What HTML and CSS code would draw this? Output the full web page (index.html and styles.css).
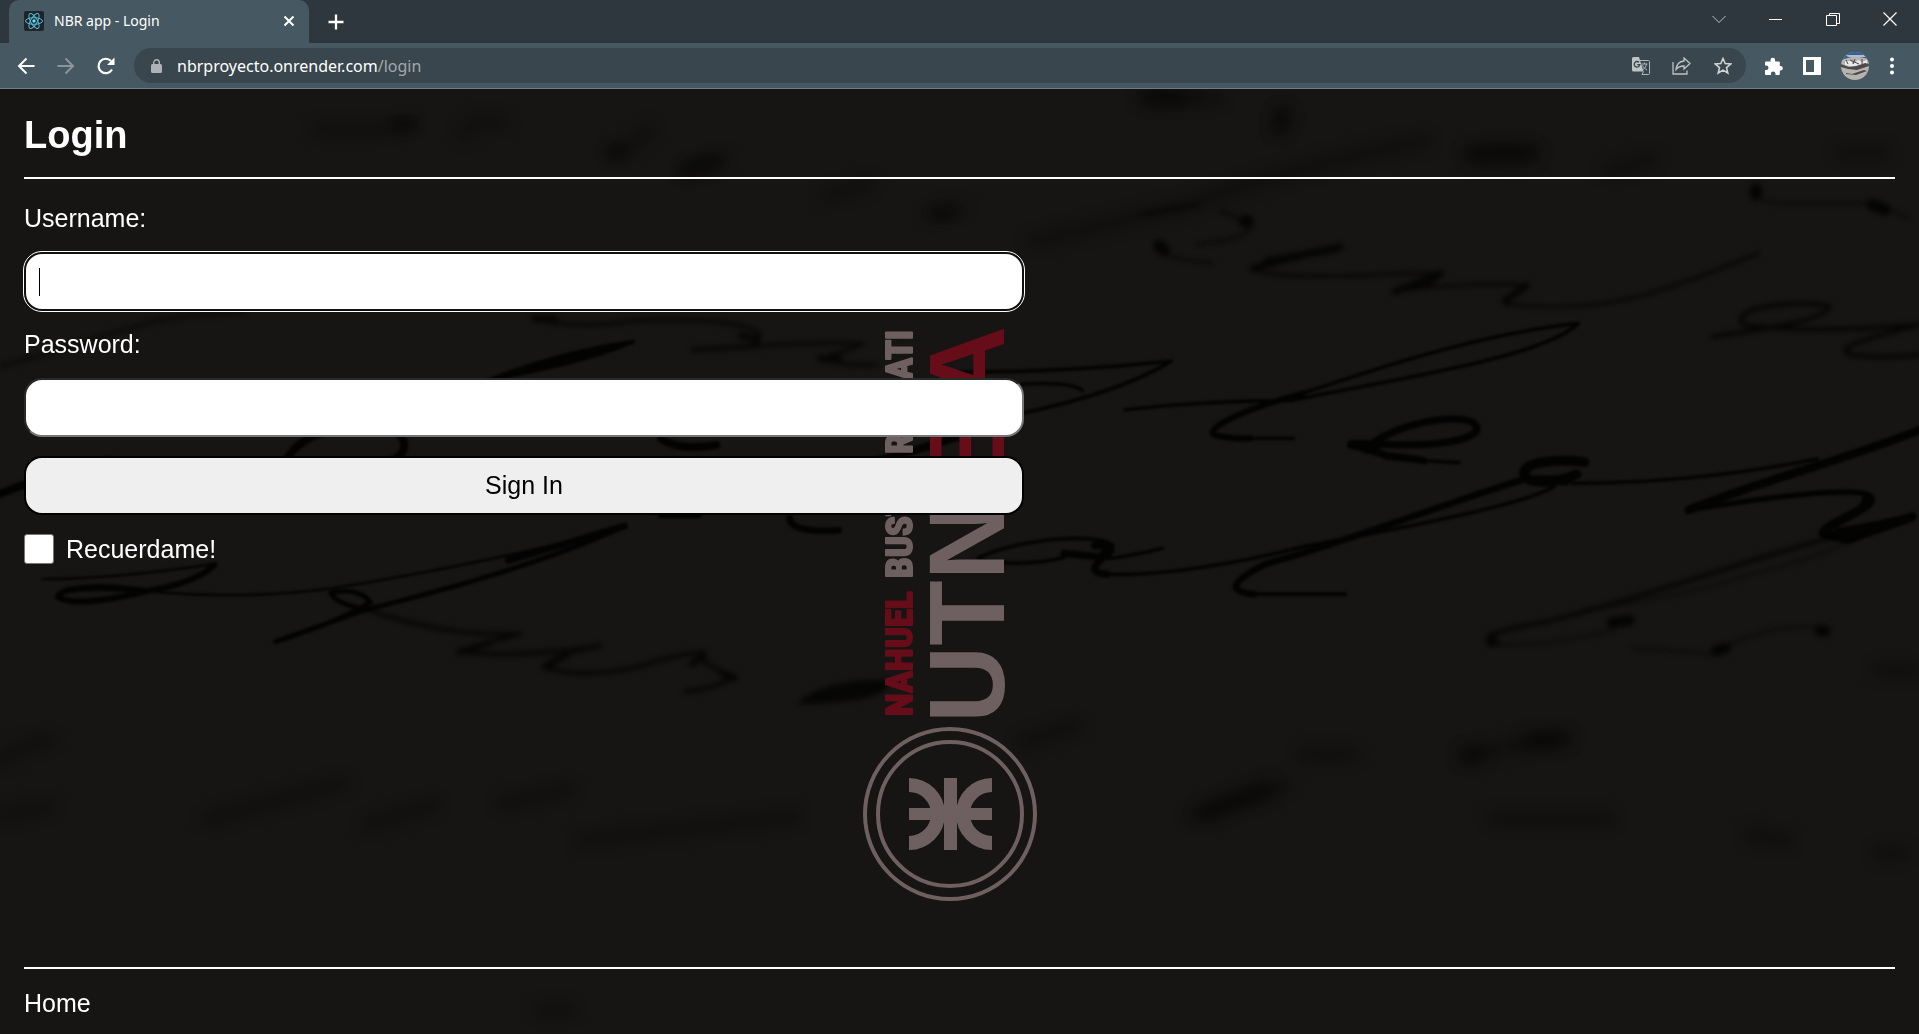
FILE: index.html
```html
<!DOCTYPE html>
<html lang="es">
<head>
<meta charset="utf-8">
<title>NBR app - Login</title>
<link rel="stylesheet" href="styles.css">
</head>
<body>
<header class="browser">
  <div class="tabstrip">
    <div class="tab">
      <svg class="favicon" viewBox="0 0 20 20" width="20" height="20" aria-hidden="true">
        <rect width="20" height="20" rx="2" fill="#20232a"/>
        <g fill="none" stroke="#53bcd8" stroke-width="1">
          <ellipse cx="10" cy="10" rx="8.5" ry="3.3"/>
          <ellipse cx="10" cy="10" rx="8.5" ry="3.3" transform="rotate(60 10 10)"/>
          <ellipse cx="10" cy="10" rx="8.5" ry="3.3" transform="rotate(120 10 10)"/>
        </g>
        <circle cx="10" cy="10" r="1.7" fill="#61dafb"/>
      </svg>
      <span class="tab-title">NBR app - Login</span>
      <button class="icon" aria-label="Close tab">
        <svg width="12" height="12" viewBox="0 0 12 12"><path d="M1.5 1.500 10.500 10.500M10.500 1.500 1.500 10.500" stroke="#fff" stroke-width="2"/></svg>
      </button>
    </div>
    <button class="icon new-tab" aria-label="New tab">
      <svg width="16" height="16" viewBox="0 0 16 16"><path d="M8 .5v15M.5 8h15" stroke="#fff" stroke-width="2.300"/></svg>
    </button>
    <div class="window-buttons">
      <button class="icon" aria-label="Search tabs"><svg width="14" height="14" viewBox="0 0 14 14"><path d="M.5 4 7 10.500 13.500 4" fill="none" stroke="#bcc2c5"/></svg></button>
      <button class="icon" aria-label="Minimize"><svg width="14" height="14" viewBox="0 0 14 14"><path d="M0 7.500h13" stroke="#fff"/></svg></button>
      <button class="icon" aria-label="Restore"><svg width="14" height="14" viewBox="0 0 14 14"><path d="M.5 3.500h10v10H.5zM3.500 3.500v-2h10v10h-3" fill="none" stroke="#fff"/></svg></button>
      <button class="icon" aria-label="Close"><svg width="14" height="14" viewBox="0 0 14 14"><path d="M.5 .5l13 13M13.500 .5l-13 13" stroke="#fff" stroke-width="1.200"/></svg></button>
    </div>
  </div>
  <div class="toolbar">
    <button class="icon nav" aria-label="Back"><svg width="18" height="18" viewBox="0 0 18 18"><path d="M17.500 9H2M9.500 1.500 2 9l7.500 7.500" fill="none" stroke="#fff" stroke-width="2"/></svg></button>
    <button class="icon nav" aria-label="Forward"><svg width="18" height="18" viewBox="0 0 18 18"><path d="M.5 9H16M8.500 1.500 16 9l-7.500 7.500" fill="none" stroke="#8b969b" stroke-width="2"/></svg></button>
    <button class="icon nav" aria-label="Reload"><svg width="20" height="18" viewBox="0 0 20 18"><path d="M16 12.500A7.200 7.200 0 1 1 15 4" fill="none" stroke="#fff" stroke-width="2.200"/><path d="M18.500 .5v7.500H11z" fill="#fff"/></svg></button>
    <div class="omnibox">
      <svg width="11" height="14" viewBox="0 0 11 14" aria-hidden="true"><rect y="5" width="11" height="9" rx="1.500" fill="#adb3b6"/><path d="M2.700 5.500V3.600a2.800 2.800 0 0 1 5.600 0V5.500" fill="none" stroke="#adb3b6" stroke-width="1.400"/></svg>
      <span class="address">nbrproyecto.onrender.com<span class="path">/login</span></span>
      <button class="icon" aria-label="Translate"><svg width="18" height="18" viewBox="0 0 18 18"><path d="M1.500 0H7l4.500 14.500h-10A1.500 1.500 0 0 1 0 13V1.500A1.500 1.500 0 0 1 1.500 0z" fill="#bec3c5"/><path d="M7.500 3.500h9a1 1 0 0 1 1 1v12a1 1 0 0 1-1 1H10l1.500-3" fill="none" stroke="#aeb4b7"/><path d="M7 5.300A2.800 2.800 0 1 0 7.800 7.700H5.200" fill="none" stroke="#39464d" stroke-width="1.300"/><path d="M9.500 7h6M12.500 5.500V7M14.500 7c-.5 3-2 4.500-4 6M10.500 8c.8 2.500 2.500 4 4.500 5" fill="none" stroke="#aeb4b7"/></svg></button>
      <button class="icon" aria-label="Share"><svg width="20" height="18" viewBox="0 0 20 18"><path d="M1 5v12h14v-3.500" fill="none" stroke="#bec3c5" stroke-width="1.300"/><path d="M4 12.500C4.500 7.500 7 4.500 12 4V1l6 5.500-6 5.500V9C8.500 9 6 10 4 12.500z" fill="none" stroke="#bec3c5" stroke-width="1.300"/></svg></button>
      <button class="icon" aria-label="Bookmark"><svg width="18" height="18" viewBox="0 0 18 18"><path d="M9 1.500l2.200 5 5.500.5-4.200 3.600 1.300 5.400L9 13.100 4.200 16l1.300-5.400L1.300 7l5.500-.5z" fill="none" stroke="#d0d3d5" stroke-width="1.600"/></svg></button>
    </div>
    <div class="actions">
      <button class="icon" aria-label="Extensions"><svg width="18" height="18" viewBox="0 0 18 18"><path d="M1 4.500h4.500V3a2.300 2.300 0 0 1 4.600 0v1.500h3.700a1 1 0 0 1 1 1V9H16a2.300 2.300 0 0 1 0 4.500h-1.200V17a1 1 0 0 1-1 1H10.500v-1.300a2.300 2.300 0 0 0-4.600 0V18H1a1 1 0 0 1-1-1v-4h1.300a2.200 2.200 0 0 0 0-4.400H0V5.500a1 1 0 0 1 1-1z" fill="#fff"/></svg></button>
      <button class="icon" aria-label="Side panel"><svg width="18" height="18" viewBox="0 0 18 18"><path d="M0 0h18v18H0zM3 3v12h8V3z" fill="#fff" fill-rule="evenodd"/></svg></button>
      <button class="icon" aria-label="Profile"><svg width="28" height="28" viewBox="0 0 28 28"><defs><clipPath id="avatar"><circle cx="14" cy="14" r="14"/></clipPath></defs><g clip-path="url(#avatar)"><rect width="28" height="28" fill="#b7b3b1"/><path d="M0 0h28v7L14 4 0 8z" fill="#38608c"/><path d="M5 3l18 0 2 2-18 0z" fill="#aac0d2"/><path d="M4 9h6l2 3 5-4 4 2 5-2v4l-12 3L4 13z" fill="#e9e9ed"/><path d="M0 12l8 3 7-1 9-3 4 1v2l-12 4-9-1-7-2zM5 21l6 1 12-4 3 1-11 4-10-1z" fill="#4d4b4a"/><path d="M5 8l2 4M14 7l-2 5M21 7v5M9 8l9 4" stroke="#45464c"/></g></svg></button>
      <button class="icon" aria-label="Menu"><svg width="6" height="18" viewBox="0 0 6 18"><g fill="#fff"><circle cx="3" cy="2.500" r="2"/><circle cx="3" cy="9" r="2"/><circle cx="3" cy="15.500" r="2"/></g></svg></button>
    </div>
  </div>
</header>

<div class="page">
  <svg class="backdrop" viewBox="0 89 1919 945" preserveAspectRatio="xMidYMid slice" aria-hidden="true">
    <defs>
      <filter id="sharp" x="-10%" y="-10%" width="120%" height="120%"><feGaussianBlur stdDeviation="1.500"/></filter>
      <filter id="soft" x="-10%" y="-10%" width="120%" height="120%"><feGaussianBlur stdDeviation="4"/></filter>
      <filter id="haze" x="-10%" y="-10%" width="120%" height="120%"><feGaussianBlur stdDeviation="12"/></filter>
    </defs>
    <!-- handwriting, left half -->
    <g transform="translate(0 80) scale(.6122 .6084)" fill="none" stroke="#040405" stroke-linecap="round" stroke-linejoin="round">
      <g filter="url(#haze)" stroke-width="18" opacity=".35">
        <path d="M520 80q80 10 150-10M760 90q0-30 60-20M1000 120q40-10 60-40M1120 150q30-10 60-20M1350 190q40-10 70-20M1520 220q30-10 50-10M0 1120q40-30 80-35M340 1215l220-60M600 1225l110-35M820 1190l110-25M950 1250l350-40M0 1210l80-15M880 1530h50"/>
      </g>
      <g filter="url(#haze)" stroke-width="22">
        <path d="M1120 148l50-15M1530 222h20M650 72h20M1000 118h15" opacity=".5"/>
      </g>
      <g filter="url(#soft)" opacity=".7">
        <path d="M0 470C90 450 160 420 240 400S360 388 400 380" stroke-width="8" opacity=".6"/>
        <path d="M870 390c40 15 90 15 150 8s210-5 220 20-50 20-110 25c80 0 160-15 280-10-30 15-60 20-70 25q40 12 90 10" stroke-width="6"/>
        <path d="M600 870c80 30 170 45 250 40q-70 20-100 30 100 10 230-10-80 15-90 35 60 20 150 0 60-20 110-25-20 15 50 40-30 20-80 25" stroke-width="7"/>
        <path d="M750 940l50-15M890 965l35-20M1150 945l-20 15M1180 975l20 8M875 393h30M1210 420l25 5M1340 458h30" stroke-width="11"/>
        <path d="M1310 1022q50-35 140-32-10 30-140 32z" fill="#040405" stroke-width="8"/>
      </g>
      <g filter="url(#sharp)" opacity=".85">
        <path d="M780 500C850 480 940 470 1035 430 960 440 880 460 780 500z" stroke-width="6" fill="#040405"/>
        <path d="M470 620q30-45 110-50t80 30-80 30M1080 590q30 20 90 10M0 680q100-40 180-55M1250 660q120-10 318-75" stroke-width="13"/>
        <path d="M1080 715h60M1290 720q0 25 80 20" stroke-width="11"/>
        <path d="M70 820q120 0 280-25-10 30-110 45C160 820 90 835 95 850s90 0 140-10q170 15 310-5C700 810 900 770 1020 733" stroke-width="4"/>
        <path d="M95 850c0-15 60-20 145-10-60 15-120 25-145 10M350 797q-30 30-110 43" stroke-width="10"/>
        <path d="M1020 733C900 790 720 840 600 870L450 923q110-35 155-65-20-25-65-15 10 20 60 27" stroke-width="8"/>
        <path d="M1020 733L830 790" stroke-width="11"/>
      </g>
    </g>
    <!-- handwriting, right half -->
    <g transform="translate(960 80) scale(.6122 .6084)" fill="none" stroke="#040405" stroke-linecap="round" stroke-linejoin="round">
      <g filter="url(#haze)" stroke-width="20" opacity=".35">
        <path d="M300 30h120M520 80l10-30M830 125l110-5M1060 150l70-20M120 265q120-30 240-55M360 210q150-60 400-110M1440 120h70M380 1210l150-50M560 1110h80M820 1110l170-30M100 1090l90-30M870 1215h190M1290 1240l60 10M1500 1270h40M1500 970h60"/>
      </g>
      <g filter="url(#haze)" stroke-width="24" opacity=".5">
        <path d="M310 28h50M525 60v15M840 120h90M400 1205l100-40M930 1085h50M830 1110h15"/>
      </g>
      <g filter="url(#soft)" opacity=".75">
        <path d="M330 280q10 15 80 20M390 270q90-10 85-35l-50-20M300 220l90-15" stroke-width="7" opacity=".6"/>
        <path d="M325 272l8 8M465 232h5" stroke-width="20"/>
        <path d="M480 310q80-25 140-35M500 298l110-20" stroke-width="12"/>
        <path d="M480 312c60 20 200 5 310 5q-20 25-80 30 100-15 215-10-50 30-30 32c160 15 240-15 410-85" stroke-width="5"/>
        <path d="M785 318l-75 30M925 338l-35 25" stroke-width="11"/>
        <path d="M1230 422c90-15 180-25 190-50-20-10-170-5-140 30q100 15 288 0c-80 20-150 40-110 50q50 6 110 0" stroke-width="7"/>
        <path d="M1300 190q20 15 60 13h140l50 25" stroke-width="5" opacity=".6"/>
        <path d="M1300 180v8M1490 205l20 8" stroke-width="20"/>
        <path d="M1430 750C1280 790 1120 850 960 890c-120 20-100 30-80 37" stroke-width="7"/>
        <path d="M880 927q90 5 190-25M1020 870q140-15 280-60 90-20 170-60M1230 940q100-50 180-40M1100 935q60 0 130 10" stroke-width="6" opacity=".5"/>
        <path d="M1065 892l28-4M1235 938l15-4M1405 905h8M868 918v5" stroke-width="18"/>
      </g>
      <g filter="url(#sharp)" opacity=".85">
        <path d="M0 480q180 0 345-18-80 50-240 85M100 500q80-5 100 10" stroke-width="6"/>
        <path d="M270 542q130-15 270-15C660 500 950 460 1010 400 870 415 720 460 560 515" stroke-width="6"/>
        <path d="M560 515C450 545 400 575 415 583q30 8 60 6" stroke-width="10"/>
        <path d="M475 589h70" stroke-width="5"/>
        <path d="M680 598C780 605 855 590 843 568 830 545 720 560 670 600l-32 0q40 10 60 18 50 5 60 8" stroke-width="12"/>
        <path d="M640 599h35M660 605l20 5" stroke-width="15"/>
        <path d="M745 625l70 4" stroke-width="6"/>
        <path d="M1020 628c-50-6-105 0-98 22 10 15 50 14 85-2M940 658h50" stroke-width="16"/>
        <path d="M30 785c80-35 200-40 220-20q-70 40 80 5M30 790q80 10 140-5" stroke-width="6"/>
        <path d="M170 778l50 5M220 765q40 0 20 15-40 30 0 32" stroke-width="12"/>
        <path d="M235 812c90 5 230-20 325-45C700 740 920 700 970 668M480 845h150" stroke-width="6"/>
        <path d="M925 655C780 700 600 770 500 795 450 820 430 840 480 845" stroke-width="11"/>
        <path d="M1000 663q200 0 400-40" stroke-width="6"/>
        <path d="M1568 575C1430 630 1300 660 1190 707" stroke-width="14"/>
        <path d="M1190 707c120-20 300-45 300-18s-90 35-80 60" stroke-width="9"/>
        <path d="M1480 690c5 20-70 40-70 55l40 10 105-37q-50 15-120 25" stroke-width="15"/>
      </g>
    </g>
    <!-- vertical brand mark -->
    <g font-family="'Liberation Sans', Arial, sans-serif" font-weight="700" font-size="107" stroke-linejoin="round">
      <g transform="translate(1004 723) rotate(-90)">
        <text fill="#6e6060">UTN</text>
        <text x="397" text-anchor="end" fill="#670c19">BA</text>
      </g>
      <g transform="translate(912 716) rotate(-90)" font-family="'Liberation Sans Narrow', 'Roboto Condensed', 'Liberation Sans', sans-serif" font-size="37" stroke-width="2">
        <text fill="#670c19" stroke="#670c19">NAHUEL</text>
        <text x="138" fill="#6e6060" stroke="#6e6060">BUSTO</text>
        <text x="262" fill="#6e6060" stroke="#6e6060">ROS<tspan x="386" text-anchor="end">ATI</tspan></text>
      </g>
    </g>
    <g fill="none" stroke="#6e6060">
      <circle cx="950" cy="814" r="85" stroke-width="4"/>
      <circle cx="950" cy="814" r="72" stroke-width="4"/>
      <path d="M950.500 778v72" stroke-width="13"/>
      <path d="M909 814h83" stroke-width="12"/>
      <path d="M909 785a29 29 0 0 1 0 58M992 785a29 29 0 0 0 0 58" stroke-width="14"/>
    </g>
  </svg>

  <main class="content">
    <h1>Login</h1>
    <hr>
    <form class="login">
      <label for="username">Username:</label>
      <input class="field active" id="username" type="text">
      <label for="password">Password:</label>
      <input class="field" id="password" type="password">
      <button class="submit" type="button">Sign In</button>
      <div class="remember">
        <input id="remember" type="checkbox">
        <label for="remember">Recuerdame!</label>
      </div>
    </form>
  </main>
  <footer class="footer">
    <hr>
    <nav><a href="#">Home</a></nav>
  </footer>
</div>
</body>
</html>
```
FILE: styles.css
```css
* { box-sizing: border-box; }

body {
  margin: 0;
  min-height: 100vh;
  display: flex;
  flex-direction: column;
  background: #161513;
  color: #fff;
  font: 25px/29px "Liberation Sans", Arial, sans-serif;
}

.icon {
  display: flex;
  align-items: center;
  justify-content: center;
  padding: 0;
  border: 0;
  background: none;
}

/* Browser frame */
.browser {
  font-family: "Noto Sans", "Open Sans", sans-serif;
  background: #465861;
  border-bottom: 1px solid #6c7d86;
}

.tabstrip {
  display: flex;
  height: 43px;
  padding-left: 9px;
  background: #2d373d;
}

.tab {
  display: flex;
  align-items: center;
  gap: 10px;
  width: 300px;
  padding: 0 14px 2px 15px;
  border-radius: 10px 10px 0 0;
  background: #465861;
}

.tab-title {
  flex: 1;
  font-size: 14px;
  line-height: 20px;
}

.new-tab { width: 54px; }

.window-buttons {
  display: flex;
  margin-left: auto;
  padding: 0 1px 6px 0;
}

.window-buttons .icon { width: 57px; }

.toolbar {
  display: flex;
  align-items: center;
  height: 45px;
  padding: 0 24px 0 6px;
}

.nav { width: 40px; }

.omnibox {
  flex: 1;
  display: flex;
  align-items: center;
  gap: 22px;
  height: 35px;
  margin-left: 8px;
  padding: 0 14px 0 17px;
  border-radius: 18px;
  background: #39464d;
}

.address {
  flex: 1;
  margin-left: -7px;
  font-size: 16px;
  line-height: 24px;
}

.path { color: #a1a8ac; }

.actions {
  display: flex;
  align-items: center;
  gap: 20px;
  margin-left: 19px;
}

/* Page */
.page {
  position: relative;
  flex: 1;
  display: flex;
  flex-direction: column;
  padding: 24px 24px 16px;
  overflow: hidden;
}

.backdrop {
  position: absolute;
  inset: 0;
  width: 100%;
  height: 100%;
}

.content,
.footer { position: relative; }

.content { flex: 1; }

h1 {
  margin: 0 0 20px;
  font-size: 38px;
  line-height: 44px;
}

hr {
  height: 2px;
  margin: 0;
  border: 0;
  background: #fff;
}

.login {
  display: flex;
  flex-direction: column;
  gap: 19px;
  max-width: 1000px;
  padding-top: 25px;
}

.field,
.submit {
  width: 100%;
  height: 59px;
  border-radius: 18px;
  font: inherit;
}

.field {
  padding: 0 13px;
  border: 2px solid;
  border-color: #2a2a2a #767676 #767676 #2a2a2a;
  background: #fff;
}

/* focused look: double ring and text cursor */
.field.active {
  border-color: #101010;
  outline: 1px solid #fff;
  background: linear-gradient(#000, #000) 13px center / 1px 28px no-repeat #fff;
}

.submit {
  border: 2px solid #000;
  background: #efefef;
  color: #000;
}

.remember {
  display: flex;
  align-items: center;
  gap: 12px;
}

.remember input {
  appearance: none;
  width: 30px;
  height: 30px;
  margin: 0;
  border: 1px solid #767676;
  border-radius: 3px;
  background: #fff;
}

.footer nav { padding-top: 20px; }

.footer a {
  display: block;
  color: #fff;
  text-decoration: none;
}
```
